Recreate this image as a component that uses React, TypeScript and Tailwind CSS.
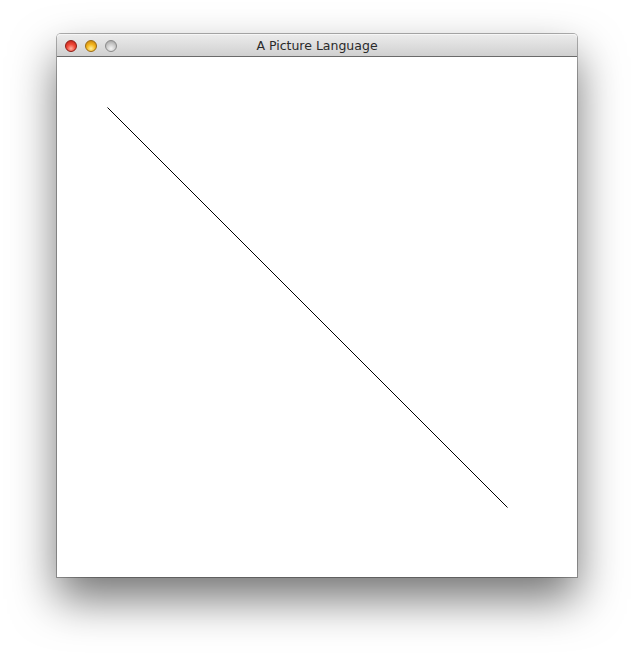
// Single window with a title bar and a canvas showing one diagonal segment.

function Light({ tone }: { tone: 'red' | 'yellow' | 'gray' }) {
  const fill =
    tone === 'red'
      ? 'bg-[radial-gradient(circle_at_50%_75%,#ffb0a0_0%,#f04a3a_45%,#b81a12_100%)] border-[#8c1a12]'
      : tone === 'yellow'
        ? 'bg-[radial-gradient(circle_at_50%_75%,#fff0a0_0%,#f5b820_45%,#c07a08_100%)] border-[#9a6a10]'
        : 'bg-[radial-gradient(circle_at_50%_75%,#f4f4f4_0%,#cfcfcf_45%,#9a9a9a_100%)] border-[#8a8a8a]';
  return <div className={`h-[12px] w-[12px] rounded-full border ${fill}`} />;
}

export default function App() {
  return (
    <div className="h-[656px] w-[634px] overflow-hidden bg-white pl-[57px] pt-[34px]">
      <div className="w-[520px] rounded-t-[4px] bg-white shadow-[0_0_0_1px_rgba(0,0,0,0.3),0_22px_45px_rgba(0,0,0,0.55)]">
        {/* title bar */}
        <div className="relative flex h-[23px] items-center rounded-t-[4px] border-b border-[#6a6a6a] bg-[linear-gradient(#ececec,#d0d0d0)] pt-[2px] shadow-[inset_0_1px_0_#f6f6f6]">
          <div className="flex items-center gap-[8px] pl-[8px]">
            <Light tone="red" />
            <Light tone="yellow" />
            <Light tone="gray" />
          </div>
          <div className="absolute inset-0 flex items-center justify-center pt-[3px] text-[12.5px] text-[#2a2a2a] [font-family:'DejaVu_Sans',sans-serif]">
            A Picture Language
          </div>
        </div>
        {/* canvas */}
        <svg width="520" height="520" className="block">
          <line x1="50.5" y1="50.5" x2="450.5" y2="450.5" stroke="#000" strokeWidth="1" />
        </svg>
      </div>
    </div>
  );
}
